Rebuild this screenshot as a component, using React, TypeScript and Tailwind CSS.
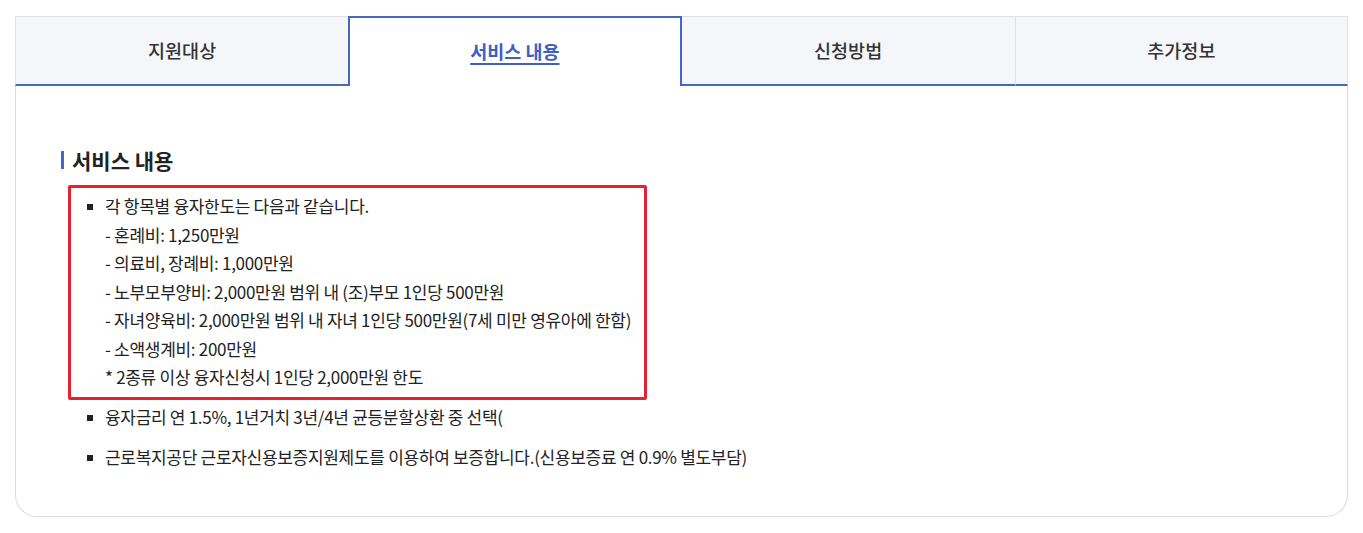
import React from "react";

const tabs = ["지원대상", "서비스 내용", "신청방법", "추가정보"];

export default function App() {
  const font = { fontFamily: '"Noto Sans CJK KR", "Noto Sans", sans-serif' };
  return (
    <div className="bg-white w-[1363px] h-[533px] pt-[16px] pl-[15px]" style={font}>
      <div className="w-[1333px]">
        <div className="grid grid-cols-4 h-[70px]">
          {tabs.map((t, i) =>
            i === 1 ? (
              <div
                key={t}
                className="flex items-center justify-center bg-white border-2 border-b-0 border-[#4466c4] text-[18.5px] font-bold text-[#3f5fc2] tracking-[0px]"
              >
                <span className="underline underline-offset-[4px] decoration-[1.5px]">{t}</span>
              </div>
            ) : (
              <div
                key={t}
                className={`flex items-center justify-center bg-[#f5f6fa] border-t border-[#dfe1ea] border-b-2 border-b-[#4466c4] text-[18.5px] font-medium text-[#333] tracking-[0px] ${
                  i === 0 ? "border-l" : ""
                } ${i === 3 ? "border-l border-r border-l-[#dfe1ea] border-r-[#dfe1ea]" : ""}`}
              >
                {t}
              </div>
            )
          )}
        </div>
        <div className="border-x border-b border-[#dcdcdc] rounded-b-[22px] pt-[60px] pb-[44px] pl-[45px]">
          <h3 className="flex items-center gap-[8px] text-[21px] font-bold text-[#222] leading-[28px] tracking-[0px]">
            <span className="w-[3px] h-[18px] bg-[#4466c4]" />
            서비스 내용
          </h3>
          <ul className="mt-[11px] text-[17px] text-[#222] leading-[28.5px] tracking-[-0.3px]">
            <li className="w-[579px] ml-[7px] border-[3px] border-[#e52330] rounded-[2px] pt-[4px] pb-[5px] pl-[16px]">
              <div className="flex">
                <span className="w-[6px] h-[6px] bg-[#222] mt-[12px] mr-[12px] shrink-0" />
                <div>
                  <div>각 항목별 융자한도는 다음과 같습니다.</div>
                  <div>- 혼례비: 1,250만원</div>
                  <div>- 의료비, 장례비: 1,000만원</div>
                  <div>- 노부모부양비: 2,000만원 범위 내 (조)부모 1인당 500만원</div>
                  <div>- 자녀양육비: 2,000만원 범위 내 자녀 1인당 500만원(7세 미만 영유아에 한함)</div>
                  <div>- 소액생계비: 200만원</div>
                  <div>* 2종류 이상 융자신청시 1인당 2,000만원 한도</div>
                </div>
              </div>
            </li>
            <li className="flex ml-[26px] mt-[3px]">
              <span className="w-[6px] h-[6px] bg-[#222] mt-[12px] mr-[12px] shrink-0" />
              <span>융자금리 연 1.5%, 1년거치 3년/4년 균등분할상환 중 선택(</span>
            </li>
            <li className="flex ml-[26px] mt-[12px]">
              <span className="w-[6px] h-[6px] bg-[#222] mt-[12px] mr-[12px] shrink-0" />
              <span>근로복지공단 근로자신용보증지원제도를 이용하여 보증합니다.(신용보증료 연 0.9% 별도부담)</span>
            </li>
          </ul>
        </div>
      </div>
    </div>
  );
}
